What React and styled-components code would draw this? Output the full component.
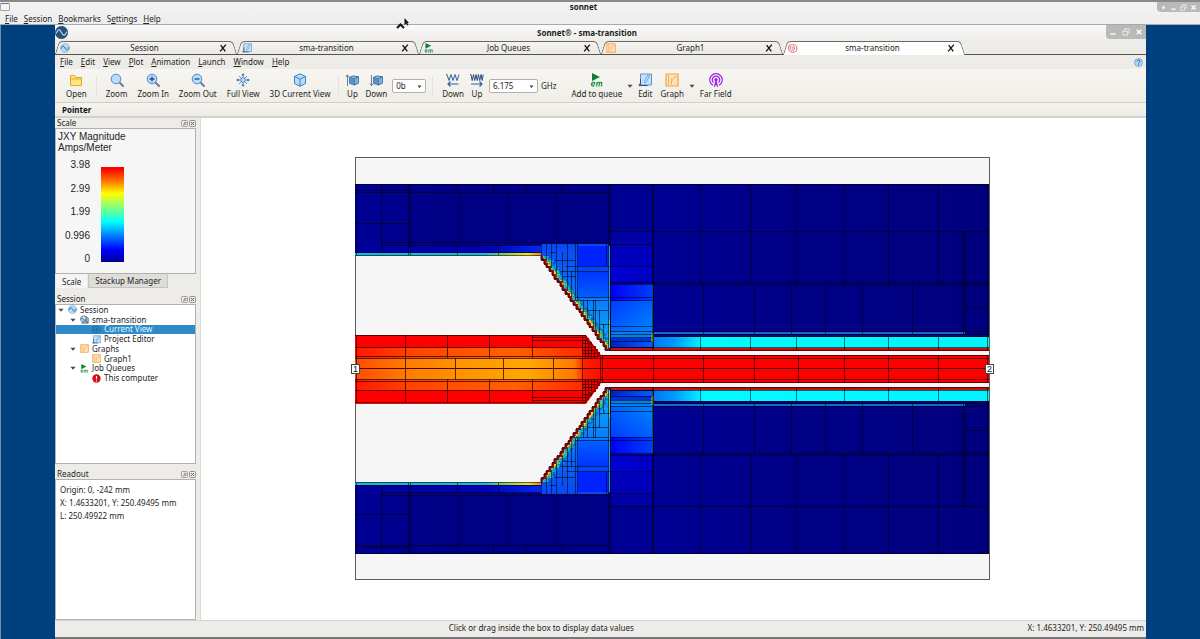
import React from "react";
import styled, { createGlobalStyle, css } from "styled-components";

const Global = createGlobalStyle`
  *, *::before, *::after { box-sizing: border-box; }
  body { margin: 0; background: #00407f; }
  button, select, input { font: inherit; color: inherit; margin: 0; padding: 0; border: 0; background: none; }
  body, #root { font: 8px/10px "Noto Sans", "DejaVu Sans", sans-serif; color: #242424; }
  svg { display: block; flex: none; }
`;

const Desktop = styled.div`
  position: relative;
  display: flex;
  flex-direction: column;
  min-height: 100vh;
  border-left: 1px solid #6f8fae;
`;

const SessionBar = styled.header`
  display: flex;
  flex-direction: column;
  height: 25px;
  margin-left: -1px;
  background: linear-gradient(#f3f3f3, #ededed);
  border-top: 2px solid #8b8988;
  border-bottom: 1px solid #a9a9a9;
`;

const TitleRow = styled.div`
  display: flex;
  align-items: ${(p) => (p.$tall ? "center" : "flex-start")};
  height: ${(p) => (p.$tall ? 15 : 11)}px;
  flex: none;
  color: #1c1c1c;
  background: ${(p) => (p.$tall ? "linear-gradient(#fafafa, #efedea)" : "none")};
`;

const WindowTitle = styled.h1`
  flex: 1;
  margin: 0;
  font: bold 8px/10px "Noto Sans", "DejaVu Sans", sans-serif;
  text-align: center;
`;

const Controls = styled.div`
  display: flex;
  align-items: center;
  justify-content: space-around;
  align-self: flex-start;
  width: ${(p) => (p.$wide ? 43 : 40)}px;
  height: ${(p) => (p.$wide ? 10 : 14)}px;
  padding: 0 1px;
  background: #b9b9b9;
  border-radius: 0 0 0 4px;
`;

const IconButton = styled.button`
  display: flex;
  align-items: center;
  justify-content: center;
`;

const Menu = styled.nav`
  display: flex;
  align-items: center;
  gap: ${(p) => p.$gap}px;
  flex: none;
  height: ${(p) => p.$height}px;
  padding: 0 3px 0 5px;
`;

const HelpButton = styled(IconButton)`
  margin-left: auto;
`;

const Window = styled.main`
  display: flex;
  flex-direction: column;
  flex: 1;
  margin: 0 54px;
  background: #eeece8;
  border-bottom: 2px solid #77767a;
`;

const TabBar = styled.div`
  display: flex;
  gap: 4px;
  height: 15px;
  padding-left: 2px;
  border-bottom: 1px solid #55524f;
  flex: none;
`;

const Tab = styled.button`
  position: relative;
  display: flex;
  align-items: center;
  width: 178px;
  height: 15px;
  padding: 0 8px 0 3px;
  z-index: ${(p) => (p.$active ? 2 : 1)};

  &::before, &::after {
    content: "";
    position: absolute;
    z-index: -1;
    top: 1px;
    bottom: ${(p) => (p.$active ? 0 : 1)}px;
    width: 55%;
    background: ${(p) => (p.$active ? "#fff" : "linear-gradient(#f4f3f1, #eceae6)")};
    border-top: 1px solid #6b6865;
  }
  &::before { left: 0; border-left: 1px solid #6b6865; border-radius: 4px 0 0 0; transform: skewX(-18deg); }
  &::after { right: 0; border-right: 1px solid #6b6865; border-radius: 0 4px 0 0; transform: skewX(18deg); }
`;

const TabLabel = styled.span`
  flex: 1;
  text-align: center;
`;

const Toolbar = styled.div`
  display: flex;
  align-items: center;
  flex: none;
  height: 34px;
  padding-left: 6px;
  background: linear-gradient(#f8f6f2, #efede6);
  border-bottom: 1px solid #d0cec9;
`;

const Tool = styled.button`
  display: flex;
  flex-direction: column;
  align-items: center;
  gap: 2px;
  padding: 0 ${(p) => p.$pad}px;
  white-space: nowrap;
`;

const Separator = styled.span`
  width: 1px;
  height: 18px;
  margin: 0 ${(p) => p.$space ?? 4}px;
  background: #e4e1dc;
`;

const Picker = styled.label`
  position: relative;
  display: flex;
  width: ${(p) => p.$width}px;
  height: 14px;
  margin-left: 2px;

  select {
    width: 100%;
    padding-left: 3px;
    appearance: none;
    background: #fff;
    border: 1px solid #b4b1ac;
    border-radius: 2px;
  }
  svg { position: absolute; right: 4px; top: 5px; pointer-events: none; }
`;

const Unit = styled.span`
  padding: 0 11px 0 3px;
`;

const DropButton = styled(IconButton)`
  width: 8px;
  height: 20px;
`;

const ModeBar = styled.div`
  flex: none;
  height: 15px;
  padding: 2px 7px;
  background: linear-gradient(#f6f5f1, #ecebe4);
  border-bottom: 2px solid #d3d1cd;
  font-weight: bold;
  color: #111;
`;

const Body = styled.div`
  display: flex;
  flex: 1;
`;

const Side = styled.aside`
  display: flex;
  flex-direction: column;
  flex: none;
  width: 146px;
  padding-right: 4px;
  border-right: 1px solid #dddbd7;
`;

const DockHead = styled.div`
  display: flex;
  align-items: center;
  gap: 1px;
  height: 10px;
  padding-left: 2px;

  h2 { flex: 1; margin: 0; font-size: 8px; font-weight: normal; }
`;

const Pane = styled.div`
  background: ${(p) => p.$fill ?? "#fff"};
  border: 1px solid #b3b1ae;
  ${(p) => p.$grow && css`flex: ${p.$grow} 0 0px;`}
  ${(p) => p.$spaced && css`margin-bottom: 5px;`}
`;

const ScalePane = styled(Pane)`
  height: 146px;
  padding: 2px 2px;
  font: 10px/12px "Liberation Sans", sans-serif;
`;

const ScaleTitle = styled.div`
  line-height: 11px;
`;

const Legend = styled.div`
  display: flex;
  gap: 11px;
  padding-top: 6px;
`;

const Ticks = styled.div`
  display: flex;
  flex-direction: column;
  justify-content: space-between;
  width: 32px;
  height: 106px;
  text-align: right;
`;

const Ramp = styled.div`
  width: 23px;
  height: 95px;
  margin-top: 8px;
  background: linear-gradient(#f00 2%, #ff8000 16%, #ff0 28%, #80ff80 43%, #0ff 58%, #0080ff 72%, #00f 87%, #000090);
`;

const DockTabs = styled.div`
  display: flex;
  height: 20px;
  align-items: flex-start;
`;

const DockTab = styled.button`
  height: ${(p) => (p.$active ? 15 : 14)}px;
  padding: 0 6px;
  background: ${(p) => (p.$active ? "#f6f5f3" : "#dfddda")};
  border: 1px solid ${(p) => (p.$active ? "#eceae7" : "#c5c3bf")};
  border-top-color: transparent;
`;

const Tree = styled.ul`
  display: grid;
  grid-template-rows: repeat(8, 1fr);
  height: 78px;
  margin: 0;
  padding: 0;
  list-style: none;
`;

const TreeRow = styled.li`
  display: flex;
  align-items: center;
  gap: 3px;
  min-height: 0;
  padding-left: ${(p) => 2 + p.$level * 12}px;
  color: ${(p) => (p.$selected ? "#e8f3fb" : "inherit")};
  background: ${(p) => (p.$selected ? "#2e8bc8" : "none")};
`;

const Twisty = styled.span`
  width: 7px;
`;

const Readout = styled.p`
  margin: 0;
  padding: 3px 4px;
  line-height: 13px;
`;

const Canvas = styled.section`
  display: flex;
  flex: 1;
  background: #fff;

  svg { flex: 1; min-width: 0; }
`;

const StatusBar = styled.footer`
  display: flex;
  align-items: center;
  flex: none;
  height: 17px;
  padding: 0 2px 3px 0;
  border-top: 1px solid #d5d3cf;
`;

const Hint = styled.span`
  flex: 1;
  text-align: center;
`;

const Pointer = styled.svg`
  position: absolute;
  left: 394px;
  top: 17px;
`;

/* ---------- icons ---------- */

const BLUE = "#3d74b5";
const PALE = "#b9dcfa";

const shapes = {
  folder: <g fill="#ffe680" stroke="#dcae1e" strokeWidth="1"><path d="M1.500 12.500v-10h4l1 2h6v8z" /><path d="M1.500 6h11" /></g>,
  zoom: <Lens />,
  zoomIn: <Lens><path d="M6 3.500v5M3.500 6h5" stroke="#1d4f8c" strokeWidth="1.300" /></Lens>,
  zoomOut: <Lens><path d="M3.500 6h5" stroke="#1d4f8c" strokeWidth="1.300" /></Lens>,
  full: (
    <g fill={BLUE}>
      <circle cx="7" cy="7" r="2.300" fill={PALE} stroke={BLUE} strokeWidth=".9" />
      <path d="M7 0l1.700 2.500H7.400V4h-.8V2.500H5.300zM7 14l1.700-2.500H7.400V10h-.8v1.500H5.300zM0 7l2.500-1.700v1.300H4v.8H2.500v1.300zM14 7l-2.500-1.700v1.300H10v.8h1.500v1.300z" />
      <path d="M3 3l2 2M11 3L9 5M3 11l2-2M11 11L9 9" stroke={BLUE} strokeWidth=".8" />
    </g>
  ),
  cube: <g fill="#b9dcfa" stroke="#3b82c4" strokeWidth="1"><path d="M7 .8l5.500 2.700v7L7 13.300 1.500 10.500v-7z" /><path d="M1.500 3.500L7 6.200l5.500-2.700M7 6.200v7" fill="none" /></g>,
  levelUp: <g><SmallBox /><path d="M2.500 13V2M.8 4l1.700-2.200L4.200 4" fill="none" stroke="#6a7f96" /></g>,
  levelDown: <g><SmallBox /><path d="M2.500 2v11M.8 10.500l1.700 2.200 1.700-2.200" fill="none" stroke="#6a7f96" /></g>,
  freqDown: <g fill="none" stroke="#2f62a0"><path d="M0 1.500h1l2 6 2-6 2 6 2-6 2 6 2-6" /><path d="M12.500 11H2M4.500 8.500L2 11l2.500 2.500" strokeWidth="1.200" /></g>,
  freqUp: <g fill="none" stroke="#2f4f80"><path d="M0 1.500h1l1.200 6 1.300-6 1.200 6L6 1.500l1.200 6 1.300-6 1.200 6 1.300-6 1.200 6 1-6" /><path d="M1 11h11M9.500 8.500L12 11l-2.500 2.500" strokeWidth="1.200" stroke="#2f62a0" /></g>,
  em: (
    <g>
      <path d="M2 0l8 4-8 4z" fill="#0b8232" />
      <path d="M1.500 11h3.200c.5-2.600-2.700-2.700-3.200 0-.4 2.300 1.800 2.500 2.900 1.500M6.500 13.500l.8-4.500m-.2 1.500c1-1.700 2.600-1.500 2.300 0l-.5 3m.5-3c1-1.700 2.700-1.500 2.400 0l-.5 3" fill="none" stroke="#1d9147" strokeWidth="1.200" />
    </g>
  ),
  edit: (
    <g stroke="#5c96d4" fill="#c4e0fb">
      <path d="M2.500 1h11v11h-11z" />
      <path d="M11.500 2.500l-3 6-1.800 1.300.2-2.200 3.300-5.800z" fill="#eef6fe" strokeWidth=".9" />
      <path d="M2.500 6v6.500h7" fill="none" stroke="#35506f" strokeWidth="1" />
      <circle cx="2" cy="12" r="1.400" fill="#3d74b5" stroke="none" />
    </g>
  ),
  graph: <g fill="#ffe2bd" stroke="#f5a23f"><path d="M1 1h12v12H1z" strokeWidth="1.200" /><path d="M3.500 2v10M6.500 12V5.500M6.500 9l2.500-5h3" fill="none" strokeWidth=".8" /></g>,
  field: (
    <g fill="none" stroke="#a020f0" strokeWidth="1.200">
      <path d="M4 12.300a6.200 6.200 0 1 1 6 0" /><path d="M4.600 9.600a3.700 3.700 0 1 1 4.800 0" />
      <circle cx="7" cy="6.800" r="1.100" fill="#a020f0" /><path d="M7 8l-1.600 5.800M7 8l1.600 5.800M6 11.500h2" />
    </g>
  ),
  wave: <g><circle cx="7" cy="7" r="6.300" fill="#b5d9f7" stroke="#86b4dc" /><path d="M1.500 8c2-5.500 4-4 5.500-1s3.500 4.500 5.500-1" fill="none" stroke="#1f5f9d" strokeWidth="1.400" /></g>,
  logo: <g><circle cx="7" cy="7" r="6.700" fill="#28507f" stroke="#163a63" strokeWidth=".6" /><path d="M1.500 8C3.500 2 5.500 4 7 7s3.500 5 5.500-1" fill="none" stroke="#cde4f8" strokeWidth="1.100" /></g>,
  project: <g><path d="M3 2h7l3 3v8H3z" fill="#93a9bb" stroke="#5c7283" /><circle cx="5" cy="6" r="4.500" fill="#cfe2ee" stroke="#5c7283" /><path d="M1.500 7c1.500-4 2.500-2 3.500 0s2.500 3 3.500-1M9 9l3 3" fill="none" stroke="#24465f" strokeWidth="1.300" /></g>,
  swirl: <path d="M7.300 7.500c-1 .8-2.200-.7-1-1.800C8 4.300 10.500 6.500 9 8.800c-1.700 2.500-6 1.500-6-2C3 2.500 8.500.8 11.300 4c2 2.500 1.500 6-.5 7.700-3 2.600-8.500 1.500-9.800-2.500-.8-3 .2-6.500 3-8" fill="none" stroke="currentColor" strokeWidth="1.200" />,
  stop: <g><circle cx="7" cy="7" r="6.500" fill="#d40f16" /><path d="M7 3v5.200M7 9.700v1.800" stroke="#fff" strokeWidth="1.700" /></g>,
  help: <g><circle cx="7" cy="7" r="6.200" fill="#b4d8fa" stroke="#4c8fd0" /><path d="M4.800 5.500c0-3 4.500-2.800 4.500-.3C9.300 7 7 6.800 7 8.800M7 10v1.500" fill="none" stroke="#23599a" strokeWidth="1.500" /></g>,
  float: <g fill="none" stroke="#7c7a78" strokeWidth="1.300"><rect x="1" y="1" width="12" height="12" rx="2" /><path d="M4 9.500h4.500V6M6 4.500h4V9M4 9.500L9.500 4.500" /></g>,
  shut: <g fill="none" stroke="#686664" strokeWidth="1.300"><rect x="1" y="1" width="12" height="12" rx="2" /><path d="M4 4l6 6M10 4l-6 6" strokeWidth="2" /></g>,
  cross: <path d="M2 13L12 1M3 2l8 11" fill="none" stroke="#161616" strokeWidth="2.400" />,
  caret: <path d="M1 4h12l-6 7z" fill="#4a4846" />,
  dot: <circle cx="7" cy="7" r="3" fill="#f5f5f5" />,
  minimize: <path d="M3 9.500h8v2H3z" fill="#e0e0e0" stroke="#fff" />,
  restore: <g fill="none" stroke="#f2f2f2" strokeWidth="1.500"><path d="M1.500 5.500h8v7h-8zM4.500 5V1.500h8v7H10" /></g>,
  exit: <path d="M3 3l8 8M11 3l-8 8" stroke="#fff" strokeWidth="2.400" />,
};

function Lens({ children }) {
  return (
    <g fill="none">
      <path d="M9 9l4 4" stroke="#6b7f96" strokeWidth="2" strokeLinecap="round" />
      <circle cx="6" cy="6" r="4.800" fill={PALE} stroke="#4b8bcd" strokeWidth="1" />
      {children}
    </g>
  );
}

function SmallBox() {
  return (
    <g stroke="#3a6da8" strokeWidth=".8" fill="#5a92cc">
      <path d="M4.500 4.500l4-1.500 5 1v6l-4 2-5-1.500z" />
      <path d="M4.500 4.500l5 1 4-1.500-5-1z" fill="#a6cdf0" />
      <path d="M9.500 5.500v6.500l4-2V4z" fill="#84b3e0" />
    </g>
  );
}

function Icon({ name, size = 14, color }) {
  return (
    <svg width={size} height={size} viewBox="0 0 14 14" color={color} aria-hidden="true">
      {shapes[name]}
    </svg>
  );
}

/* ---------- current density plot ---------- */

const AXIS = 369;
const MIRROR = `translate(0 ${AXIS * 2}) scale(1 -1)`;
const slopeX = (y) => 541 + ((y - 255) * 68) / 95;

function stairs(x0, y0, x1, y1, n) {
  let d = `M${x0} ${y0}`;
  for (let i = 1; i <= n; i++) {
    d += `V${Math.round(y0 + ((y1 - y0) * i) / n)}H${Math.round(x0 + ((x1 - x0) * i) / n)}`;
  }
  return d;
}

// Small mesh cells that hug the tapered edge, hottest next to the metal edge.
function fineCells() {
  const cells = [];
  for (let y = 256; y < 348; y += 2) {
    const depth = y > 320 ? 6 : 4;
    for (let k = 0; k < depth; k++) {
      const x = Math.round(slopeX(y)) + k * 2 + 1;
      const n = (y * 7 + k * 13 + ((y * k) % 5)) % 10;
      if (x > 608 || (k > 2 && n < 5)) continue;
      const warm = ["#e8d820", "#60e080", "#20d0c8", "#18b8e0"];
      const cool = ["#10a8e8", "#1088f8", "#28c8a8", "#0c78f8"];
      cells.push(<rect key={`${x}-${y}`} x={x} y={y} width="2" height="2" fill={(k < 2 ? warm : cool)[n % 4]} />);
    }
  }
  return cells;
}

const upperLines = [
  // ground plane, left of the taper
  "M355 184.500H989M355 192.500H608M355 190.500H410M355 223.500H408M381 242.500H608M381 245.500H541M355 252.500H541M355 255.500H541",
  "M356.500 184V255M381.500 184V252M408.500 184V255M410.500 184V255M460.500 192V242M508.500 192V242M556.500 192V242",
  "M457.500 184V192M493.500 184V192M526.500 184V192M561.500 184V192M457.500 245V255M498.500 245V255",
  // taper
  "M567.500 244V291M575.500 244V300M577.500 244V300M556.500 244V276M562.500 252V283M606.500 244V266M551.500 244V268M546.500 244V262M571.500 271V296M541.500 244V256",
  "M566 266.500H652M560 271.500H608M575 297.500H652M575 300.500H608M554 260.500H575M562 276.500H575M550 252.500H556M587 310.500H608M599 324.500H610",
  "M583.500 300V314M587.500 300V320M593.500 300V328M595.500 300V331M599.500 310V337M603.500 324V342",
  // middle column
  "M608.500 184V350M610.500 184V350M652.500 184V350M653.500 184V350M608 231.500H989M610 244.500H652M610 282.500H989M610 284.500H989",
  "M610 300.500H652M610 326.500H652M610 331.500H652M610 334.500H652M610 337.500H652M610 341.500H652",
  // right-hand ground plane
  "M700.500 184V284M750.500 184V284M796.500 184V284M844.500 184V284M888.500 184V284M938.500 184V284M987.500 184V350",
  "M703.500 284V334M754.500 284V334M791.500 284V334M825.500 284V334M862.500 284V334M912.500 284V334M963.500 231V334M965.500 231V334M965 307.500H989",
  "M700.500 336V350M750.500 336V350M796.500 336V350M844.500 336V350M888.500 336V350M938.500 336V350",
  "M654 331.500H989M654 334.500H989M654 336.500H989M610 347.500H989M610 350.500H989",
];

const innerLines = [
  "M355 335.500H586M355 347.500H594M355 356.500H601M355 358.500H989M532 337.500H586M532 340.500H587",
  "M356.500 335V369M405.500 335V369M447.500 335V358M489.500 335V358M532.500 335V358M455.500 358V369M503.500 358V369M553.500 358V369",
  "M582.500 335V369M585.500 335V358M588.500 338V358M591.500 342V358M594.500 346V358M597.500 350V358M583 343.500H592M583 350.500H597M583 353.500H599M600.500 355V369M602.500 355V369",
  "M653.500 355V369M703.500 355V369M754.500 355V369M798.500 355V369M844.500 355V369M888.500 355V369M938.500 355V369M987.500 355V369M601 355.500H989",
];

function GroundHalf() {
  return (
    <g>
      <path d="M355 184H989V351H609L541 256H355z" fill="url(#navy)" />
      <rect x="355" y="245" width="186" height="8" fill="url(#under)" />
      <rect x="355" y="253" width="186" height="3" fill="url(#edge)" />
      <path d="M541 244H609V351L541 256z" fill="url(#taper)" />
      <rect x="578" y="246" width="30" height="20" fill="#0022ff" />
      <rect x="578" y="266" width="30" height="6" fill="#0048f8" />
      <rect x="578" y="272" width="30" height="26" fill="url(#taperLow)" />
      {fineCells()}
      <rect x="611" y="184" width="41" height="48" fill="#000092" />
      <rect x="611" y="232" width="41" height="13" fill="#0000a4" />
      <rect x="611" y="245" width="41" height="21" fill="#0000bc" />
      <rect x="611" y="266" width="41" height="17" fill="url(#colHigh)" />
      <rect x="611" y="284" width="41" height="17" fill="url(#colMid)" />
      <rect x="611" y="301" width="41" height="31" fill="url(#colLow)" />
      <rect x="611" y="332" width="41" height="6" fill="#0080f0" />
      <rect x="611" y="338" width="41" height="4" fill="#0030d8" />
      <rect x="611" y="342" width="41" height="5" fill="url(#colFoot)" />
      <path d="M609.500 246V320" stroke="#12a0d8" />
      <path d="M609.500 320V348" stroke="#7fdc60" />
      <path d="M652.500 284V347" stroke="#18a8e8" />
      <path d="M652.500 333V342" stroke="#e8e020" strokeWidth="2" />
      <rect x="654" y="332" width="311" height="2" fill="#1767cf" />
      <rect x="654" y="337" width="335" height="11" fill="url(#slot)" />
      <rect x="610" y="348" width="379" height="3" fill="#d00b08" />
      <g stroke="#000" strokeOpacity=".55" strokeWidth="1" fill="none">
        {upperLines.map((d) => <path key={d} d={d} />)}
      </g>
      <g stroke="#00102a" strokeOpacity=".55" strokeWidth=".6" fill="none">
        <path d={stairs(545, 255, 609, 344, 30)} />
        <path d={stairs(549, 255, 608, 338, 22)} />
      </g>
      <path d={stairs(542, 256, 609, 350, 25)} fill="none" stroke="#9a0c08" strokeWidth="2" />
      <path d={stairs(541, 256, 608, 350, 25)} fill="none" stroke="#4a0504" strokeWidth="1" />
    </g>
  );
}

function Plot() {
  return (
    <svg viewBox="201 118 945 502" role="img" aria-label="Current density of sma-transition">
      <defs>
        <linearGradient id="navy"><stop offset="0" stopColor="#000096" /><stop offset=".15" stopColor="#000084" /><stop offset=".4" stopColor="#000086" /><stop offset=".47" stopColor="#000094" /><stop offset=".7" stopColor="#000086" /><stop offset="1" stopColor="#00007e" /></linearGradient>
        <linearGradient id="under"><stop offset="0" stopColor="#00009a" /><stop offset=".7" stopColor="#0000b4" /><stop offset="1" stopColor="#0028f4" /></linearGradient>
        <linearGradient id="edge"><stop offset="0" stopColor="#1bb4dc" /><stop offset=".7" stopColor="#22b4d0" /><stop offset=".82" stopColor="#90d050" /><stop offset=".93" stopColor="#f4e020" /><stop offset="1" stopColor="#f08010" /></linearGradient>
        <linearGradient id="taper" x2="0" y2="1"><stop offset="0" stopColor="#0848f4" /><stop offset=".5" stopColor="#0878ff" /><stop offset="1" stopColor="#12b8f0" /></linearGradient>
        <linearGradient id="taperLow" x2="0" y2="1"><stop offset="0" stopColor="#0034ff" /><stop offset="1" stopColor="#0060ff" /></linearGradient>
        <linearGradient id="colHigh" x2="1" y2="1"><stop offset="0" stopColor="#0000e4" /><stop offset="1" stopColor="#0000b4" /></linearGradient>
        <linearGradient id="colMid"><stop offset="0" stopColor="#0000f4" /><stop offset="1" stopColor="#003cff" /></linearGradient>
        <linearGradient id="colLow" x2="1" y2="1"><stop offset="0" stopColor="#003cff" /><stop offset="1" stopColor="#0084ff" /></linearGradient>
        <linearGradient id="colFoot"><stop offset="0" stopColor="#0020c0" /><stop offset="1" stopColor="#0060ff" /></linearGradient>
        <linearGradient id="slot"><stop offset="0" stopColor="#0078f0" /><stop offset=".06" stopColor="#0098ff" /><stop offset=".15" stopColor="#00fcff" /><stop offset="1" stopColor="#00f4ff" /></linearGradient>
        <linearGradient id="inner" gradientUnits="userSpaceOnUse" x1="355" y1="0" x2="610" y2="0"><stop offset="0" stopColor="#ff4c00" /><stop offset=".2" stopColor="#ff7c00" /><stop offset=".42" stopColor="#ff9400" /><stop offset=".68" stopColor="#ffa800" /><stop offset=".86" stopColor="#ff7a00" /><stop offset=".9" stopColor="#ff2000" /><stop offset="1" stopColor="#ff0000" /></linearGradient>
        <linearGradient id="innerSide"><stop offset="0" stopColor="#ff1800" /><stop offset=".25" stopColor="#ff4400" /><stop offset=".7" stopColor="#ff6000" /><stop offset="1" stopColor="#ff2a00" /></linearGradient>
      </defs>
      <rect x="355.500" y="157.500" width="634" height="422" fill="#f6f6f6" stroke="#5c5c5c" />
      <GroundHalf />
      <g transform={MIRROR}><GroundHalf /></g>
      <path d="M355 335H586L601 355H989V383H601L586 404H355z" fill="#ff0000" />
      <rect x="355" y="348" width="228" height="42" fill="url(#innerSide)" />
      <rect x="355" y="358" width="250" height="22" fill="url(#inner)" />
      {[undefined, MIRROR].map((flip) => (
        <g key={flip ?? "top"} transform={flip} stroke="#300000" strokeOpacity=".75" fill="none">
          {innerLines.map((d) => <path key={d} d={d} />)}
          <path d={stairs(586, 336, 601, 356, 7)} stroke="#a00000" strokeOpacity="1" strokeWidth="2" />
        </g>
      ))}
      <path d="M355 368.500H989" stroke="#500000" />
      {[["1", 355], ["2", 989]].map(([label, x]) => (
        <g key={label}>
          <rect x={x - 3.5} y="364.500" width="8" height="9" fill="#fff" stroke="#444" />
          <text x={x + 0.5} y="372" textAnchor="middle" fontFamily="Liberation Sans, sans-serif" fontSize="9" fill="#111">{label}</text>
        </g>
      ))}
    </svg>
  );
}

/* ---------- page ---------- */

function MenuItem({ label, at = 0 }) {
  return (
    <button>
      {label.slice(0, at)}<u>{label[at]}</u>{label.slice(at + 1)}
    </button>
  );
}

function ToolButton({ icon, label, pad = 5 }) {
  return <Tool $pad={pad}><Icon name={icon} /><span>{label}</span></Tool>;
}

function Dock({ title }) {
  return (
    <DockHead>
      <h2>{title}</h2>
      <IconButton aria-label={`Float ${title}`}><Icon name="float" size={7} /></IconButton>
      <IconButton aria-label={`Close ${title}`}><Icon name="shut" size={7} /></IconButton>
    </DockHead>
  );
}

const tabs = [
  ["wave", "Session"],
  ["edit", "sma-transition"],
  ["em", "Job Queues"],
  ["graph", "Graph1"],
  ["swirl", "sma-transition"],
];

const tree = [
  [0, "wave", "Session", true],
  [1, "project", "sma-transition", true],
  [2, "swirl", "Current View"],
  [2, "edit", "Project Editor"],
  [1, "graph", "Graphs", true],
  [2, "graph", "Graph1"],
  [1, "em", "Job Queues", true],
  [2, "stop", "This computer"],
];

export default function App() {
  return (
    <>
      <Global />
      <Desktop>
        <SessionBar>
          <TitleRow>
            <svg width="10" height="9" viewBox="0 0 10 9"><path d="M.5 1.500h9v7h-9z" fill="#f4f4f4" stroke="#a8a8a8" /><path d="M1 1.500h8" stroke="#4d7fae" /></svg>
            <WindowTitle>sonnet</WindowTitle>
            <Controls $wide>
              {["dot", "minimize", "restore", "exit"].map((n) => <IconButton key={n} aria-label={n}><Icon name={n} size={7} /></IconButton>)}
            </Controls>
          </TitleRow>
          <Menu $gap={6} $height={11}>
            <MenuItem label="File" /><MenuItem label="Session" /><MenuItem label="Bookmarks" /><MenuItem label="Settings" at={1} /><MenuItem label="Help" />
          </Menu>
        </SessionBar>

        <Window>
          <TitleRow $tall>
            <Icon name="logo" size={13} />
            <WindowTitle as="h2">Sonnet® - sma-transition</WindowTitle>
            <Controls>
              {["minimize", "restore", "exit"].map((n) => <IconButton key={n} aria-label={n}><Icon name={n} size={8} /></IconButton>)}
            </Controls>
          </TitleRow>

          <TabBar role="tablist">
            {tabs.map(([icon, label], i) => (
              <Tab key={i} role="tab" aria-selected={i === 4} $active={i === 4}>
                <Icon name={icon} size={10} color="#e2474f" />
                <TabLabel>{label}</TabLabel>
                <Icon name="cross" size={8} />
              </Tab>
            ))}
          </TabBar>

          <Menu $gap={8} $height={14}>
            {["File", "Edit", "View", "Plot", "Animation", "Launch", "Window", "Help"].map((m) => <MenuItem key={m} label={m} />)}
            <HelpButton aria-label="Context help"><Icon name="help" size={9} /></HelpButton>
          </Menu>

          <Toolbar>
            <ToolButton icon="folder" label="Open" />
            <Separator />
            <ToolButton icon="zoom" label="Zoom" />
            <ToolButton icon="zoomIn" label="Zoom In" />
            <ToolButton icon="zoomOut" label="Zoom Out" />
            <ToolButton icon="full" label="Full View" />
            <ToolButton icon="cube" label="3D Current View" />
            <Separator $space={3} />
            <ToolButton icon="levelUp" label="Up" pad={3} />
            <ToolButton icon="levelDown" label="Down" pad={3} />
            <Picker $width={34}>
              <select aria-label="Level" defaultValue="0b"><option>0b</option></select>
              <Icon name="caret" size={5} />
            </Picker>
            <Separator $space={6} />
            <ToolButton icon="freqDown" label="Down" pad={3} />
            <ToolButton icon="freqUp" label="Up" pad={3} />
            <Picker $width={49}>
              <select aria-label="Frequency" defaultValue="6.175"><option>6.175</option></select>
              <Icon name="caret" size={5} />
            </Picker>
            <Unit>GHz</Unit>
            <ToolButton icon="em" label="Add to queue" pad={4} />
            <DropButton aria-label="Queue options"><Icon name="caret" size={6} /></DropButton>
            <ToolButton icon="edit" label="Edit" pad={4} />
            <ToolButton icon="graph" label="Graph" pad={4} />
            <DropButton aria-label="Graph options"><Icon name="caret" size={6} /></DropButton>
            <ToolButton icon="field" label="Far Field" pad={4} />
          </Toolbar>
          <ModeBar>Pointer</ModeBar>

          <Body>
            <Side>
              <Dock title="Scale" />
              <ScalePane $fill="#f6f6f6">
                <ScaleTitle>JXY Magnitude<br />Amps/Meter</ScaleTitle>
                <Legend>
                  <Ticks><span>3.98</span><span>2.99</span><span>1.99</span><span>0.996</span><span>0</span></Ticks>
                  <Ramp />
                </Legend>
              </ScalePane>
              <DockTabs>
                <DockTab $active>Scale</DockTab>
                <DockTab>Stackup Manager</DockTab>
              </DockTabs>
              <Dock title="Session" />
              <Pane $grow={8} $spaced>
                <Tree>
                  {tree.map(([level, icon, label, open], i) => (
                    <TreeRow key={i} $level={level} $selected={i === 2}>
                      <Twisty>{open && <Icon name="caret" size={6} />}</Twisty>
                      <Icon name={icon} size={9} color="#1f5f94" />
                      {label}
                    </TreeRow>
                  ))}
                </Tree>
              </Pane>
              <Dock title="Readout" />
              <Pane $grow={7}>
                <Readout>Origin: 0, -242 mm<br />X: 1.4633201, Y: 250.49495 mm<br />L: 250.49922 mm</Readout>
              </Pane>
            </Side>
            <Canvas><Plot /></Canvas>
          </Body>

          <StatusBar>
            <Hint>Click or drag inside the box to display data values</Hint>
            <span>X: 1.4633201, Y: 250.49495 mm</span>
          </StatusBar>
        </Window>

        <Pointer width="18" height="14" viewBox="0 0 18 14">
          <path d="M2 11l3.500-3.500L9 11" fill="none" stroke="#111" strokeWidth="2" />
          <path d="M9.500 1v7l1.700-1.500 1 2 1.200-.6-1-2H14z" fill="#111" />
        </Pointer>
      </Desktop>
    </>
  );
}
